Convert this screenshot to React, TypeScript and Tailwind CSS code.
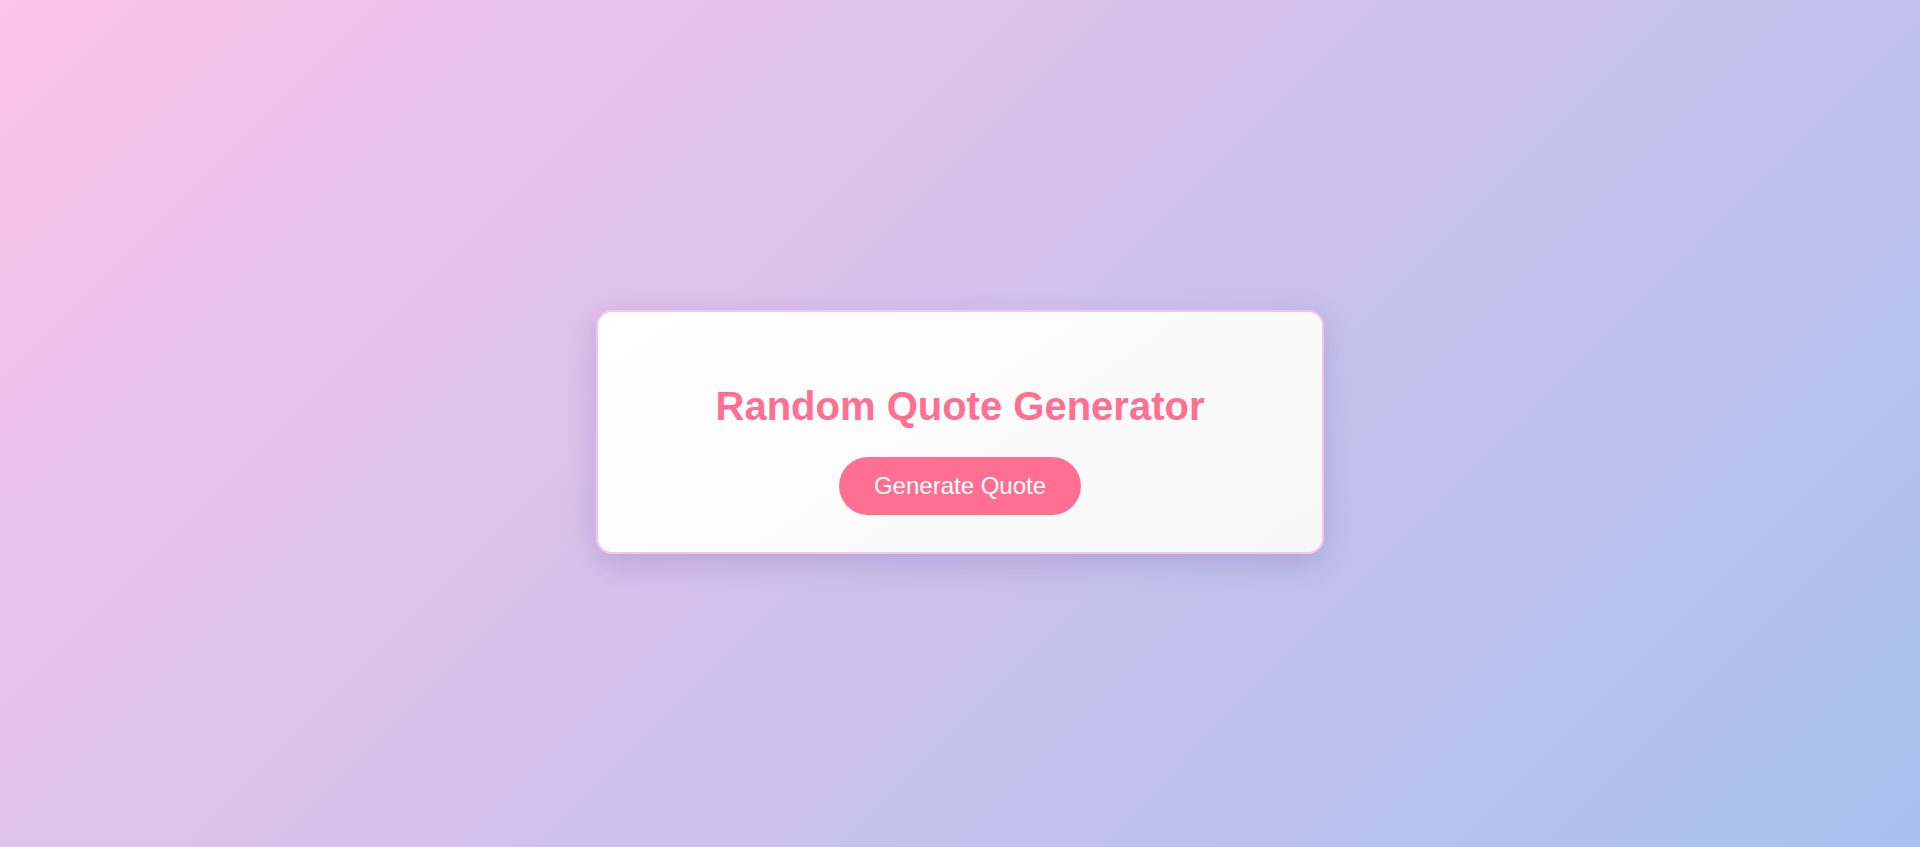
import React, { useState } from 'react';

const quotes = [
    'The best way to get started is to quit talking and begin doing.',
    'Stay hungry, stay foolish.',
    'Simplicity is the ultimate sophistication.',
];

const App = () => {
    const [quote, setQuote] = useState<string | null>(null);

    const generate = () => {
        setQuote(quotes[Math.floor(Math.random() * quotes.length)]);
    };

    return (
        <div className="min-h-[847px] w-full flex items-center justify-center pt-[17px] bg-[linear-gradient(135deg,#fbc2eb_0%,#a6c1ee_100%)]">
            <div className="w-[728px] flex flex-col items-center pt-[71px] pb-[37px] px-10 rounded-[16px] border-2 border-[#f5c4ee] bg-[linear-gradient(145deg,#ffffff,#f7f7f7)] shadow-[0_10px_30px_rgba(60,40,120,0.18)]">
                <h1 className="text-[40px] leading-[46px] font-bold text-[#ff6f91] mb-[28px] font-['Comic_Sans_MS','Liberation_Sans',sans-serif]">
                    Random Quote Generator
                </h1>
                {quote && (
                    <p className="text-lg text-gray-600 mb-6 font-['Liberation_Sans',sans-serif]">{quote}</p>
                )}
                <button
                    onClick={generate}
                    className="h-[58px] px-[35px] rounded-full bg-[#ff6f91] text-white text-[24px] leading-none font-['Liberation_Sans',sans-serif]"
                >
                    Generate Quote
                </button>
            </div>
        </div>
    );
};

export default App;
